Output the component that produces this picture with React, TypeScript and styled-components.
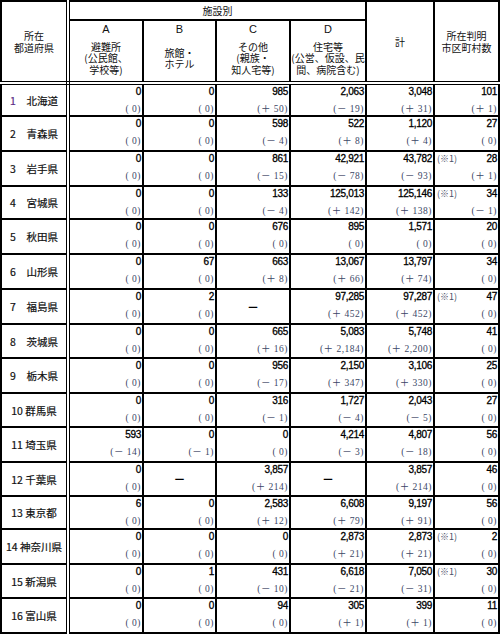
import React from "react";
import styled, { createGlobalStyle } from "styled-components";

const GlobalStyle = createGlobalStyle`
  html, body {
    margin: 0;
    padding: 0;
    background: #f4f7e2;
  }
  body {
    font-family: "Noto Sans CJK JP", "Liberation Sans", sans-serif;
    color: #000;
  }
`;

const Table = styled.table`
  border-collapse: collapse;
  table-layout: fixed;
  width: 500px;
  background: #fff;
`;

const BodyRow = styled.tr<{ $h: number }>`
  height: ${(p) => p.$h}px;
`;

const Th = styled.th<{ $prefCol?: boolean; $bottomDouble?: boolean }>`
  border: 2px solid #000;
  ${(p) => (p.$prefCol ? "border-right: 4px double #000;" : "")}
  ${(p) => (p.$bottomDouble ? "border-bottom: 4px double #000;" : "")}
  font-weight: normal;
  font-size: 10px;
  line-height: 11.5px;
  text-align: center;
  vertical-align: middle;
  padding: 0;
  color: #111;
`;

const GroupLabel = styled.div`
  height: 17px;
  line-height: 18px;
`;

const SubTh = styled(Th)`
  vertical-align: top;
  padding: 0;
`;

const SubInner = styled.div`
  display: flex;
  flex-direction: column;
  align-items: center;
  height: 60px;
`;

const Letter = styled.div`
  font-family: "Liberation Sans", Arial, sans-serif;
  font-size: 11px;
  line-height: 12px;
  margin-top: 2px;
`;

const Desc = styled.div`
  flex: 1;
  display: flex;
  flex-direction: column;
  justify-content: center;
  align-items: center;
  line-height: 11.5px;
  white-space: nowrap;
`;

const PrefTd = styled.td`
  border: 2px solid #000;
  border-right: 4px double #000;
  text-align: center;
  vertical-align: middle;
  font-size: 10.5px;
  padding: 0;
  color: #111;
  white-space: pre;
  -webkit-text-stroke: 0.2px #111;
`;

const PrefNo = styled.span<{ $purple?: boolean }>`
  color: ${(p) => (p.$purple ? "#5a2c86" : "#111")};
  -webkit-text-stroke: 0.2px ${(p) => (p.$purple ? "#5a2c86" : "#111")};
`;

const Td = styled.td`
  border: 2px solid #000;
  vertical-align: top;
  text-align: right;
  padding: 0 1px 0 2px;
`;

const DashTd = styled.td`
  border: 2px solid #000;
  vertical-align: middle;
  text-align: center;
  padding: 0;
  font-family: "Noto Sans CJK JP", sans-serif;
  font-size: 12px;
  font-weight: bold;
  line-height: 12px;
`;

const ValueLine = styled.div`
  display: flex;
  justify-content: space-between;
  align-items: baseline;
  margin-top: 1px;
  height: 12px;
`;

const Value = styled.span`
  margin-left: auto;
  font-family: "Liberation Sans", Arial, sans-serif;
  font-size: 10px;
  line-height: 12px;
  letter-spacing: -0.3px;
  color: #000;
  -webkit-text-stroke: 0.3px #000;
`;

const Note = styled.span`
  font-family: "Noto Sans CJK JP", sans-serif;
  font-size: 9px;
  line-height: 12px;
  color: #4a5068;
`;

const Paren = styled.div`
  margin-top: 5px;
  font-family: "Liberation Serif", "Noto Sans CJK JP", serif;
  font-size: 9.5px;
  line-height: 12px;
  letter-spacing: 0.5px;
  color: #3b4766;
  white-space: pre;
`;

type Cell = [string, string] | null;

interface Row {
  no: string;
  name: string;
  h: number;
  cells: Cell[];
  note?: boolean;
}

const z: Cell = ["0", " 0"];

const rows: Row[] = [
  { no: "1", name: "北海道", h: 33, cells: [z, z, ["985", "＋ 50"], ["2,063", "－ 19"], ["3,048", "＋ 31"], ["101", "＋ 1"]] },
  { no: "2", name: "青森県", h: 35, cells: [z, z, ["598", "－ 4"], ["522", "＋ 8"], ["1,120", "＋ 4"], ["27", " 0"]] },
  { no: "3", name: "岩手県", h: 35, note: true, cells: [z, z, ["861", "－ 15"], ["42,921", "－ 78"], ["43,782", "－ 93"], ["28", "＋ 1"]] },
  { no: "4", name: "宮城県", h: 33, note: true, cells: [z, z, ["133", "－ 4"], ["125,013", "＋ 142"], ["125,146", "＋ 138"], ["34", "－ 1"]] },
  { no: "5", name: "秋田県", h: 35, cells: [z, z, ["676", " 0"], ["895", " 0"], ["1,571", " 0"], ["20", " 0"]] },
  { no: "6", name: "山形県", h: 35, cells: [z, ["67", " 0"], ["663", "＋ 8"], ["13,067", "＋ 66"], ["13,797", "＋ 74"], ["34", " 0"]] },
  { no: "7", name: "福島県", h: 35, note: true, cells: [z, ["2", " 0"], null, ["97,285", "＋ 452"], ["97,287", "＋ 452"], ["47", " 0"]] },
  { no: "8", name: "茨城県", h: 34, cells: [z, z, ["665", "＋ 16"], ["5,083", "＋ 2,184"], ["5,748", "＋ 2,200"], ["41", " 0"]] },
  { no: "9", name: "栃木県", h: 35, cells: [z, z, ["956", "－ 17"], ["2,150", "＋ 347"], ["3,106", "＋ 330"], ["25", " 0"]] },
  { no: "10", name: "群馬県", h: 34, cells: [z, z, ["316", "－ 1"], ["1,727", "－ 4"], ["2,043", "－ 5"], ["27", " 0"]] },
  { no: "11", name: "埼玉県", h: 35, cells: [["593", "－ 14"], ["0", "－ 1"], z, ["4,214", "－ 3"], ["4,807", "－ 18"], ["56", " 0"]] },
  { no: "12", name: "千葉県", h: 34, cells: [z, null, ["3,857", "＋ 214"], null, ["3,857", "＋ 214"], ["46", " 0"]] },
  { no: "13", name: "東京都", h: 33, cells: [["6", " 0"], z, ["2,583", "＋ 12"], ["6,608", "＋ 79"], ["9,197", "＋ 91"], ["56", " 0"]] },
  { no: "14", name: "神奈川県", h: 35, note: true, cells: [z, z, z, ["2,873", "＋ 21"], ["2,873", "＋ 21"], ["2", " 0"]] },
  { no: "15", name: "新潟県", h: 34, note: true, cells: [z, ["1", " 0"], ["431", "－ 10"], ["6,618", "－ 21"], ["7,050", "－ 31"], ["30", " 0"]] },
  { no: "16", name: "富山県", h: 35, cells: [z, z, ["94", " 0"], ["305", "＋ 1"], ["399", "＋ 1"], ["11", " 0"]] },
];

const DataCell: React.FC<{ cell: Cell; note?: boolean }> = ({ cell, note }) => {
  if (!cell) return <DashTd>－</DashTd>;
  return (
    <Td>
      <ValueLine>
        {note && <Note>(※1)</Note>}
        <Value>{cell[0]}</Value>
      </ValueLine>
      <Paren>{`(${cell[1]})`}</Paren>
    </Td>
  );
};

const App: React.FC = () => (
  <>
    <GlobalStyle />
    <Table>
      <colgroup>
        <col style={{ width: 67 }} />
        <col style={{ width: 75 }} />
        <col style={{ width: 73 }} />
        <col style={{ width: 74 }} />
        <col style={{ width: 76 }} />
        <col style={{ width: 68 }} />
        <col style={{ width: 65 }} />
      </colgroup>
      <thead>
        <tr>
          <Th rowSpan={2} $prefCol $bottomDouble>
            所在
            <br />
            都道府県
          </Th>
          <Th colSpan={4}>
            <GroupLabel>施設別</GroupLabel>
          </Th>
          <Th rowSpan={2} $bottomDouble>
            計
          </Th>
          <Th rowSpan={2} $bottomDouble>
            所在判明
            <br />
            市区町村数
          </Th>
        </tr>
        <tr>
          <SubTh $bottomDouble>
            <SubInner>
              <Letter>A</Letter>
              <Desc>
                <span>避難所</span>
                <span>(公民館、</span>
                <span>学校等)</span>
              </Desc>
            </SubInner>
          </SubTh>
          <SubTh $bottomDouble>
            <SubInner>
              <Letter>B</Letter>
              <Desc>
                <span>旅館・</span>
                <span>ホテル</span>
              </Desc>
            </SubInner>
          </SubTh>
          <SubTh $bottomDouble>
            <SubInner>
              <Letter>C</Letter>
              <Desc>
                <span>その他</span>
                <span>(親族・</span>
                <span>知人宅等)</span>
              </Desc>
            </SubInner>
          </SubTh>
          <SubTh $bottomDouble>
            <SubInner>
              <Letter>D</Letter>
              <Desc>
                <span>住宅等</span>
                <span>(公営、仮設、民</span>
                <span>間、病院含む)</span>
              </Desc>
            </SubInner>
          </SubTh>
        </tr>
      </thead>
      <tbody>
        {rows.map((r, i) => (
          <BodyRow key={r.no} $h={r.h}>
            <PrefTd>
              <PrefNo $purple={i === 0}>{r.no}</PrefNo>
              {r.no.length === 1 ? "　" : " "}
              {r.name}
            </PrefTd>
            {r.cells.map((c, j) => (
              <DataCell key={j} cell={c} note={j === 5 && r.note} />
            ))}
          </BodyRow>
        ))}
      </tbody>
    </Table>
  </>
);

export default App;
